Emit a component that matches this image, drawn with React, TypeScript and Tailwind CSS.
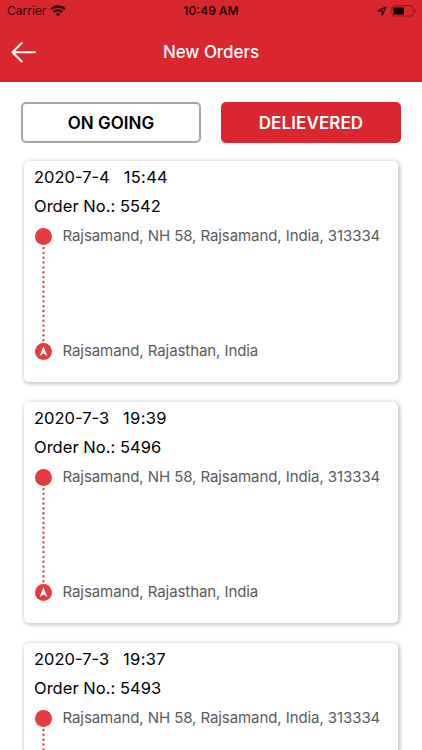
type Order = {
  id: number;
  date: string;
  time: string;
  from: string;
  to: string;
};

const orders: Order[] = [
  { id: 5542, date: "2020-7-4", time: "15:44", from: "Rajsamand, NH 58, Rajsamand, India, 313334", to: "Rajsamand, Rajasthan, India" },
  { id: 5496, date: "2020-7-3", time: "19:39", from: "Rajsamand, NH 58, Rajsamand, India, 313334", to: "Rajsamand, Rajasthan, India" },
  { id: 5493, date: "2020-7-3", time: "19:37", from: "Rajsamand, NH 58, Rajsamand, India, 313334", to: "Rajsamand, Rajasthan, India" },
];

function StatusBar() {
  return (
    <div className="grid h-[22px] grid-cols-3 items-center text-[#2a0508]">
      <div className="flex items-center gap-[4px] pl-[7px]">
        <span className="text-[12px] leading-[22px]">Carrier</span>
        <svg width="16" height="12" viewBox="0 0 16 12" fill="none" stroke="currentColor">
          <path d="M1 4.4C5 .5 11 .5 15 4.4" strokeWidth="2.3" />
          <path d="M3.7 7.1C6.2 4.8 9.8 4.8 12.3 7.1" strokeWidth="2.1" />
          <path d="M8 11.6L5.5 9C7 7.7 9 7.7 10.5 9Z" fill="currentColor" stroke="none" />
        </svg>
      </div>
      <span className="text-center text-[12px] font-semibold leading-[22px]">10:49 AM</span>
      <div className="flex items-center justify-end gap-1 pr-[5px]">
        <svg width="10" height="10" viewBox="0 0 10 10" fill="none" stroke="currentColor" strokeWidth="1.3" strokeLinejoin="round">
          <path d="M9 1L1 4.6L5 5L5.3 9Z" />
        </svg>
        <svg width="26" height="12" viewBox="0 0 26 12" fill="none">
          <rect x="0.8" y="0.8" width="21.4" height="10.2" rx="2.6" stroke="#8b151e" />
          <rect x="2.5" y="2.5" width="10.5" height="7" rx="1" fill="#0c0001" />
          <path d="M23.8 4.2V7.8C25.4 7.2 25.4 4.8 23.8 4.2Z" fill="#8b151e" />
        </svg>
      </div>
    </div>
  );
}

function Header() {
  return (
    <header className="h-[81.5px] bg-[#da272f]">
      <StatusBar />
      <div className="grid h-[59px] grid-cols-[60px_1fr_60px] items-center">
        <button className="pl-[11px] text-white" aria-label="Back">
          <svg width="26" height="22" viewBox="0 0 26 22" fill="none" stroke="currentColor" strokeWidth="2.1" strokeLinecap="round" strokeLinejoin="round">
            <path d="M10.8 2L1.5 11.2L10.8 20.4M1.5 11.2H24" />
          </svg>
        </button>
        <h1 className="text-center text-[17px] font-medium leading-6 tracking-[-0.05px] text-white">New Orders</h1>
      </div>
    </header>
  );
}

function OrderCard({ order }: { order: Order }) {
  return (
    <div className="flex h-[221px] flex-col rounded-[5px] bg-white pl-[10px] shadow-[1px_1px_4px_1px_rgba(0,0,0,0.24)]">
      <div className="flex h-[32px] items-center gap-[14px] text-[16.5px] text-black">
        <span>{order.date}</span>
        <span className="tracking-[0.3px]">{order.time}</span>
      </div>
      <div className="flex h-[27px] items-center text-[16.5px] tracking-[0.03px] text-black">Order No.: {order.id}</div>
      <div className="mt-[7px] flex gap-[9px]">
        <div className="flex w-[19.5px] flex-col items-center pt-[1px]">
          <span className="h-[17px] w-[17px] rounded-full bg-[#e33b3e]" />
          <svg width="3" height="98" viewBox="0 0 3 98">
            <line x1="1.5" y1="3" x2="1.5" y2="97" stroke="#d9434a" strokeWidth="2.4" strokeLinecap="round" strokeDasharray="0 4.85" />
          </svg>
          <svg width="17" height="17" viewBox="0 0 17 17">
            <circle cx="8.5" cy="8.5" r="8.5" fill="#e33b3e" />
            <path d="M8.5 3.2L12.4 13L8.5 10.6L4.6 13Z" fill="#fff" />
          </svg>
        </div>
        <div className="flex h-[132px] flex-col justify-between whitespace-nowrap text-[15px] leading-[17px] tracking-[-0.08px] text-[#5a5a5a]">
          <span>{order.from}</span>
          <span>{order.to}</span>
        </div>
      </div>
    </div>
  );
}

export default function App() {
  return (
    <div className="h-[750px] w-[422px] overflow-hidden bg-white font-['Inter',sans-serif]">
      <Header />
      <div className="mt-[20.5px] flex justify-between pl-[21px] pr-[21px]">
        <button className="h-[41px] w-[180px] rounded-[5px] border-2 border-[#a6a6a6] bg-white pt-[2px] text-[17px] font-semibold text-black">
          ON GOING
        </button>
        <button className="h-[41px] w-[180px] rounded-[5px] bg-[#da272f] pt-[2px] text-[17px] font-semibold tracking-[0.1px] text-white">
          DELIEVERED
        </button>
      </div>
      <div className="mt-[18px] flex flex-col gap-[20px] pl-[24px] pr-[24px]">
        {orders.map((order) => (
          <OrderCard key={order.id} order={order} />
        ))}
      </div>
    </div>
  );
}
